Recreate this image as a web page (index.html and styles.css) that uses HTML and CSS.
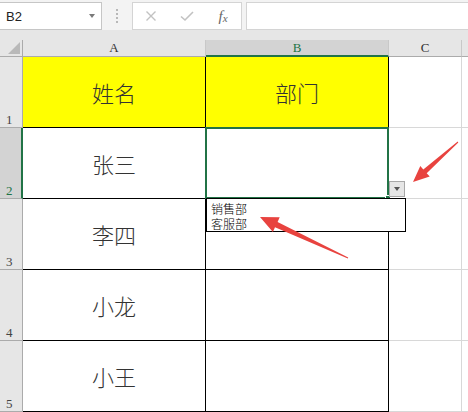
FILE: index.html
```html
<!DOCTYPE html>
<html lang="zh">
<head>
    <meta charset="UTF-8">
    <meta name="viewport" content="width=device-width, initial-scale=1.0">
    <title>数据验证 - 下拉列表</title>
    <link rel="stylesheet" href="styles.css">
</head>
<body>
    <!-- Barra della formula -->
    <div class="toolbar">
        <div class="name-box">
            <span>B2</span>
            <span class="caret"></span>
        </div>
        <div class="grip"><i></i><i></i><i></i><i></i></div>
        <div class="fx-buttons">
            <span class="fx-btn">
                <svg width="12" height="12" viewBox="0 0 12 12"><path d="M1.5 1.5 L10.5 10.5 M10.5 1.5 L1.5 10.5" stroke="#c2c2c2" stroke-width="1.4" fill="none"/></svg>
            </span>
            <span class="fx-btn">
                <svg width="14" height="12" viewBox="0 0 14 12"><path d="M1 6.5 L5 10 L13 2" stroke="#c2c2c2" stroke-width="1.6" fill="none"/></svg>
            </span>
            <span class="fx-btn fx-label">f<small>x</small></span>
        </div>
        <div class="formula-input"></div>
    </div>

    <!-- Foglio -->
    <div class="sheet">
        <div class="grid">
            <div class="corner"><span class="corner-mark"></span></div>
            <div class="col-head">A</div>
            <div class="col-head active">B</div>
            <div class="col-head">C</div>
            <div class="col-head last"></div>

            <div class="row-head">1</div>
            <div class="cell yellow">姓名</div>
            <div class="cell yellow">部门</div>
            <div class="grid-c"></div>
            <div class="grid-d"></div>

            <div class="row-head active">2</div>
            <div class="cell">张三</div>
            <div class="cell selected">
                <span class="fill-handle"></span>
                <span class="dd-button"><span class="caret dark"></span></span>
                <div class="dd-list">
                    <div>销售部</div>
                    <div>客服部</div>
                </div>
            </div>
            <div class="grid-c"></div>
            <div class="grid-d"></div>

            <div class="row-head">3</div>
            <div class="cell">李四</div>
            <div class="cell"></div>
            <div class="grid-c"></div>
            <div class="grid-d"></div>

            <div class="row-head">4</div>
            <div class="cell">小龙</div>
            <div class="cell"></div>
            <div class="grid-c"></div>
            <div class="grid-d"></div>

            <div class="row-head">5</div>
            <div class="cell">小王</div>
            <div class="cell"></div>
            <div class="grid-c"></div>
            <div class="grid-d"></div>
        </div>
    </div>

    <!-- Frecce di annotazione -->
    <svg class="arrows" width="468" height="412" viewBox="0 0 468 412">
        <polygon points="413,182 429.7,176.6 426.7,173.2 458.3,142.4 457.7,141.6 423.3,169.4 420.3,166.1" fill="#e8433f"/>
        <polygon points="260,217 279.7,217.3 277.6,221.9 348.2,257.5 347.8,258.5 275,227.3 272.9,231.9" fill="#e8433f"/>
    </svg>
</body>
</html>
```

FILE: styles.css
```css
* {
    box-sizing: border-box;
}

body {
    font-family: "Liberation Sans", Arial, sans-serif;
    margin: 0;
    padding: 0;
    width: 468px;
    height: 412px;
    overflow: hidden;
    position: relative;
    background-color: #fff;
}

/* barra formula */
.toolbar {
    display: flex;
    height: 30px;
    padding-top: 2px;
    background-color: #f3f3f3;
}

.name-box {
    width: 103px;
    margin-left: -1px;
    background-color: #fff;
    border: 1px solid #c6c6c6;
    display: flex;
    align-items: center;
    justify-content: space-between;
    padding: 0 6px 0 6px;
    font-size: 13px;
    color: #222;
}

.caret {
    width: 0;
    height: 0;
    border-left: 3.5px solid transparent;
    border-right: 3.5px solid transparent;
    border-top: 4px solid #7a7a7a;
}

.caret.dark {
    border-top-color: #555;
}

.grip {
    width: 30px;
    display: flex;
    flex-direction: column;
    align-items: center;
    justify-content: center;
    gap: 2px;
}

.grip i {
    width: 2px;
    height: 2px;
    background-color: #b8b8b8;
}

.fx-buttons {
    width: 110px;
    background-color: #fff;
    border: 1px solid #d4d4d4;
    display: flex;
}

.fx-btn {
    width: 36px;
    display: flex;
    align-items: center;
    justify-content: center;
}

.fx-label {
    font-family: "Liberation Serif", serif;
    font-style: italic;
    font-size: 15px;
    color: #666;
}

.fx-label small {
    font-size: 11px;
    margin-top: 4px;
}

.formula-input {
    flex: 1;
    margin-left: 4px;
    margin-right: -1px;
    background-color: #fff;
    border: 1px solid #d4d4d4;
}

/* foglio */
.sheet {
    padding-top: 10px;
    background-color: #e6e6e6;
}

.grid {
    display: grid;
    grid-template-columns: 23px 183px 183px 73px 1fr;
    grid-template-rows: 17px repeat(5, 71px);
    background-color: #fff;
}

.corner {
    background-color: #e6e6e6;
    border-right: 1px solid #ababab;
    border-bottom: 1px solid #ababab;
    display: flex;
    align-items: flex-end;
    justify-content: flex-end;
    padding: 0 2px 2px 0;
}

.corner-mark {
    width: 0;
    height: 0;
    border-left: 12px solid transparent;
    border-bottom: 12px solid #b9b9b9;
}

.col-head {
    background-color: #e6e6e6;
    border-right: 1px solid #c8c8c8;
    border-bottom: 1px solid #ababab;
    display: flex;
    align-items: center;
    justify-content: center;
    font-family: "Liberation Serif", serif;
    font-size: 13px;
    color: #333;
}

.col-head.active {
    background-color: #d3d3d3;
    color: #217346;
    border-bottom: 2px solid #217346;
}

.col-head.last {
    border-right: none;
}

.row-head {
    background-color: #e6e6e6;
    border-right: 1px solid #ababab;
    border-bottom: 1px solid #ababab;
    display: flex;
    align-items: flex-end;
    padding: 0 0 1px 6px;
    font-family: "Liberation Serif", serif;
    font-size: 13px;
    line-height: 12px;
    color: #444;
}

.row-head.active {
    background-color: #d3d3d3;
    border-right: 2px solid #217346;
    color: #217346;
}

.cell {
    border-right: 1px solid #000;
    border-bottom: 1px solid #000;
    display: flex;
    align-items: center;
    justify-content: center;
    font-family: "Noto Sans CJK SC", sans-serif;
    font-size: 22px;
    font-weight: 300;
    color: #333;
}

.yellow {
    background-color: #ffff00;
}

.grid-c {
    border-right: 1px solid #d8d8d8;
    border-bottom: 1px solid #d8d8d8;
}

.grid-d {
    border-bottom: 1px solid #d8d8d8;
}

/* cella selezionata con menu a tendina */
.selected {
    position: relative;
    z-index: 2;
}

.selected::before {
    content: "";
    position: absolute;
    top: -1px;
    left: -1px;
    right: -1px;
    bottom: -1px;
    border: 2px solid #217346;
}

.fill-handle {
    position: absolute;
    right: -3px;
    bottom: -3px;
    width: 6px;
    height: 6px;
    background-color: #217346;
    border: 1px solid #fff;
}

.dd-button {
    position: absolute;
    left: calc(100% + 1px);
    top: 53px;
    width: 16px;
    height: 16px;
    background-color: #e6e6e6;
    border: 1px solid #a8a8a8;
    display: flex;
    align-items: center;
    justify-content: center;
}

.dd-list {
    position: absolute;
    left: 0;
    top: 100%;
    width: 200px;
    height: 34px;
    background-color: #fff;
    border: 1px solid #000;
    padding: 2px 4px;
    font-family: "Noto Sans CJK SC", sans-serif;
    font-size: 12px;
    line-height: 15px;
    color: #000;
}

.arrows {
    position: absolute;
    top: 0;
    left: 0;
    z-index: 5;
    pointer-events: none;
}
```
